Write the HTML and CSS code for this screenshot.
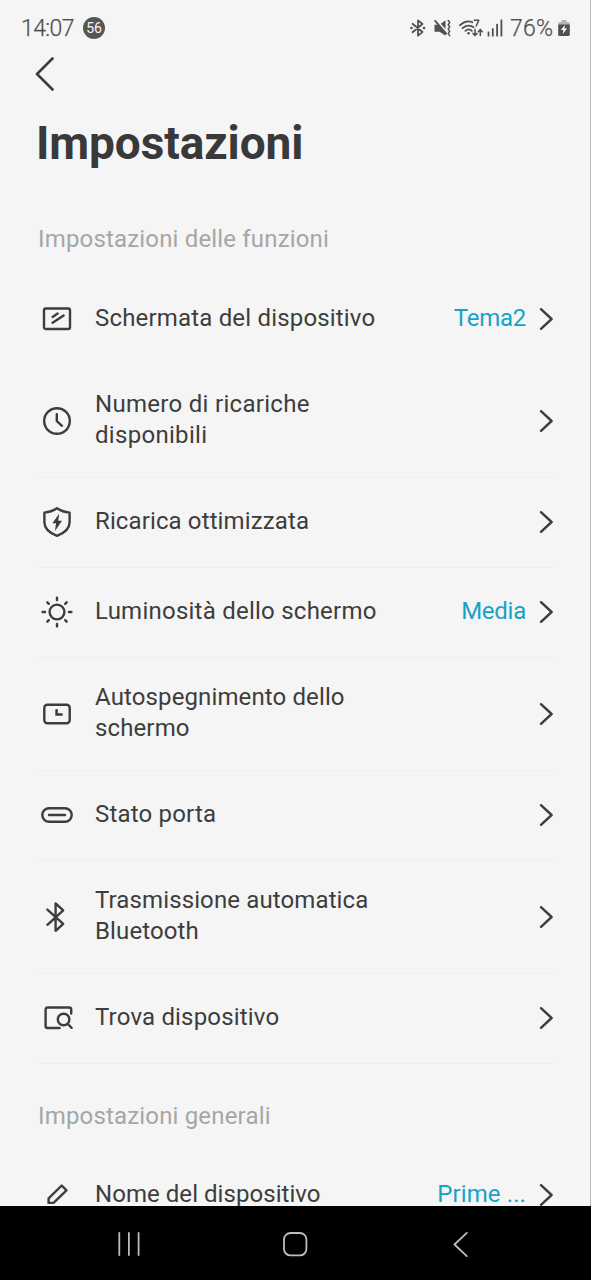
FILE: index.html
```html
<!DOCTYPE html>
<html lang="it">
<head>
<meta charset="utf-8">
<title>Impostazioni</title>
<link rel="stylesheet" href="styles.css">
</head>
<body>
<svg class="defs" aria-hidden="true">
  <symbol id="chevron" viewBox="0 0 14 22"><path d="M2 1.200 12.600 11 2 20.800"/></symbol>
</svg>
<div class="screen">
  <header class="status">
    <span class="clock">14:07</span>
    <span class="count">56</span>
    <div class="indicators">
      <svg class="s-bt" viewBox="0 0 16 18"><path d="M2.500 4.800 12.500 13 8 16.600V1.400L12.500 5 2.500 13.200"/><path class="dots" d="M1.400 9h.2M14 9h.2"/></svg>
      <svg class="s-mute" viewBox="0 0 18 18"><path class="fill" d="M.5 5.800h3.700l7.300 8v3L5.600 12.800H.5zM6.800 4.800l4.700-3.600v8.800z"/><path d="M1.200 1.800 12.200 14.600"/><path class="thin" d="M14.200 1.500l1.500 2-1.500 2.300 1.500 2.200-1.500 2.200 1.500 2.200-1.500 2.200 1.500 2"/></svg>
      <svg class="s-wifi" viewBox="0 0 25 18"><path d="M1 6.200C5 2.400 10 1.700 13.400 3.200M3.600 9.200c3.400-3.300 8-3.400 11-.8M6.400 11.900c2-1.800 4.600-1.800 6.400 0"/><circle cx="9.600" cy="14.200" r="1.300"/><path class="thin" d="M15.300 1.200h4.500L17.200 7M16 10.400v6M14 14.400l2 2.200 2-2.200M21.300 16.600v-6M19.300 12.700l2-2.200 2 2.200"/></svg>
      <svg class="s-signal" viewBox="0 0 17 18"><path d="M1.500 13.500v3.200M5.800 10v6.700M10.100 5.600v11.100M14.400 1.200v15.500"/></svg>
      <span class="percent">76%</span>
      <svg class="s-batt" viewBox="0 0 12 18"><path class="tip" d="M3.500 1h5v2h1.700q1.600 0 1.600 1.600V6H.2V4.600Q.2 3 1.800 3h1.700z"/><path class="fill" d="M.2 5.500h11.600v9.900q0 1.600-1.600 1.600H1.800q-1.600 0-1.600-1.600z"/><path class="bolt" d="M7.200 5.800 2.800 11h2.600l-.7 4 4.500-5.400H6.500z"/></svg>
    </div>
  </header>
  <nav class="topbar"><svg class="back" viewBox="0 0 20 34"><path d="M17.500 1.500 2 17 17.500 32.500"/></svg></nav>
  <h1 class="title">Impostazioni</h1>
  <main class="content">
    <h2 class="section s-functions">Impostazioni delle funzioni</h2>
    <ul class="list">
      <li class="row no-line">
        <svg class="icon" viewBox="0 0 32 32"><rect x="3" y="5.500" width="26" height="20.500" rx="1.800"/><path d="M11.600 13.900 16.600 10.600M11.600 19.800 22.600 12.600"/></svg>
        <span class="label">Schermata del dispositivo</span><span class="value v-theme">Tema2</span><svg class="chevron"><use href="#chevron"/></svg>
      </li>
      <li class="row tall">
        <svg class="icon" viewBox="0 0 32 32"><circle cx="16" cy="16" r="12.800"/><path d="M15.800 9.300v6.900l5.200 4.600"/></svg>
        <span class="label l-count">Numero di ricariche<br>disponibili</span><svg class="chevron"><use href="#chevron"/></svg>
      </li>
      <li class="row">
        <svg class="icon" viewBox="0 0 32 32"><path d="M16 2.200c3.800 2.600 8 4 12.600 4.400v9.600c0 6.400-5.600 10.900-12.600 13.600C9 27.100 3.400 22.600 3.400 16.200V6.600C8 6.200 12.200 4.800 16 2.200Z"/><path class="fill" d="M18.200 7.400 11.400 17.200h3.600L14 25l7-10.200h-3.800z"/></svg>
        <span class="label l-charge">Ricarica ottimizzata</span><svg class="chevron"><use href="#chevron"/></svg>
      </li>
      <li class="row">
        <svg class="icon" viewBox="0 0 32 32"><circle cx="16" cy="16" r="7.400"/><path d="M16 1.600v2.400M16 28v2.400M1.600 16H4M28 16h2.400M6.300 6.300l1.500 1.500M24.200 24.200l1.500 1.500M25.700 6.300l-1.500 1.500M7.800 24.200l-1.500 1.500"/></svg>
        <span class="label l-light">Luminosità dello schermo</span><span class="value v-light">Media</span><svg class="chevron"><use href="#chevron"/></svg>
      </li>
      <li class="row tall">
        <svg class="icon" viewBox="0 0 32 32"><rect x="3.300" y="6.800" width="25.400" height="18.400" rx="3"/><path class="square" d="M15.600 12.300v4.200h5"/></svg>
        <span class="label l-off">Autospegnimento dello<br>schermo</span><svg class="chevron"><use href="#chevron"/></svg>
      </li>
      <li class="row">
        <svg class="icon" viewBox="0 0 32 32"><rect x="1.300" y="9.200" width="29.400" height="13.600" rx="6.800"/><path d="M8 16h16"/></svg>
        <span class="label l-port">Stato porta</span><svg class="chevron"><use href="#chevron"/></svg>
      </li>
      <li class="row tall">
        <svg class="icon" viewBox="0 0 32 32"><path d="M6.400 8.600 22.200 22.800 14.600 29.800V2.400L22.200 9.400 6.400 23.800"/></svg>
        <span class="label l-bt">Trasmissione automatica<br>Bluetooth</span><svg class="chevron"><use href="#chevron"/></svg>
      </li>
      <li class="row">
        <svg class="icon" viewBox="0 0 32 32"><path d="M30.200 11.500V7.500q0-2-2-2H6.600q-2 0-2 2V24q0 2 2 2h12"/><circle cx="22.600" cy="17.500" r="5.800"/><path d="M26.800 22 30.600 25.800"/></svg>
        <span class="label l-find">Trova dispositivo</span><svg class="chevron"><use href="#chevron"/></svg>
      </li>
    </ul>
    <h2 class="section s-general">Impostazioni generali</h2>
    <ul class="list">
      <li class="row">
        <svg class="icon" viewBox="0 0 32 32"><path d="M7.600 23.900v-4.600L20.700 6.500l4.800 4.800-13 12.600z"/></svg>
        <span class="label l-name">Nome del dispositivo</span><span class="value v-name">Prime ...</span><svg class="chevron"><use href="#chevron"/></svg>
      </li>
    </ul>
  </main>
  <footer class="navbar">
    <svg viewBox="0 0 26 26"><path d="M3.300 2v22M12.900 2v22M22.600 2v22"/></svg>
    <svg viewBox="0 0 26 26"><rect x="2" y="2" width="22.400" height="22.400" rx="6.500"/></svg>
    <svg viewBox="0 0 26 26"><path d="M18.800 1.800 6.500 13.500 18.800 25.200"/></svg>
  </footer>
</div>
</body>
</html>
```

FILE: styles.css
```css
* { box-sizing: border-box; }
body { margin: 0; background: #f5f5f5; color: #3d3d3d; font-family: Roboto, "Noto Sans", sans-serif; }
svg { flex: none; fill: none; stroke: currentColor; stroke-linecap: round; stroke-linejoin: round; }
.defs { display: none; }
.screen { display: flex; flex-direction: column; height: 1280px; overflow: hidden; }
.status, .topbar, .title, .content { border-right: 1px solid #bdbdbd; }

.status { display: flex; align-items: center; height: 56px; padding: 0 20px 0 21px; color: #505050; }
.clock { font-size: 23px; letter-spacing: -0.6px; font-weight: 300; -webkit-text-stroke: .25px currentColor; width: 62px; }
.count { width: 22px; height: 22px; border-radius: 50%; background: #565656; color: #f5f5f5; font-size: 14px; line-height: 22px; text-align: center; }
.indicators { display: flex; align-items: center; margin-left: auto; height: 22px; }
.indicators svg { height: 18px; stroke-width: 1.8; }
.indicators .fill, .indicators circle { fill: currentColor; stroke: none; }
.indicators .thin { stroke-width: 1.5; }
.s-bt { width: 16px; margin-right: 8px; }
.s-bt .dots { stroke-width: 2.4; }
.s-mute { width: 18px; margin-right: 7px; }
.s-wifi { width: 25px; margin-right: 3px; }
.s-signal { width: 17px; margin-right: 6px; }
.percent { width: 48px; font-size: 23px; font-weight: 300; -webkit-text-stroke: .25px currentColor; letter-spacing: .2px; }
.s-batt { width: 12px; }
.s-batt .tip { fill: #b4b4b4; stroke: none; }
.s-batt .bolt { fill: #f5f5f5; stroke: none; }

.topbar { height: 44px; padding: 1px 0 0 35px; }
.back { display: block; width: 20px; height: 34px; stroke-width: 2.6; }
.title { margin: 0; height: 87px; padding: 16px 0 0 36px; font-size: 46px; line-height: 54px; font-weight: 700; letter-spacing: -0.1px; color: #393939; white-space: nowrap; }
.content { flex: 1; min-height: 0; padding: 0 37px 0 38px; overflow: hidden; }
.section { margin: 0; height: 87px; padding-top: 38px; font-size: 24px; line-height: 28px; font-weight: 400; letter-spacing: .17px; color: #a6a6a6; white-space: nowrap; }
.s-functions { height: 88px; }
.list { margin: 0; padding: 0; list-style: none; }
.row { display: flex; align-items: center; height: 90px; padding-bottom: 1px; border-bottom: 1px solid #eee; }
.row.tall { height: 113px; padding-bottom: 0; }
.row.no-line { border-color: transparent; }
.icon { width: 32px; height: 32px; margin: 0 22px 0 3px; stroke-width: 2.4; }
.icon .fill { fill: currentColor; stroke: none; }
.icon .square { stroke-linejoin: miter; stroke-width: 2.6; }
.label { flex: 1; font-size: 24px; line-height: 31px; padding-bottom: 2px; letter-spacing: .18px; white-space: nowrap; }
.tall .label { padding-bottom: 3px; }
.l-count { letter-spacing: .3px; }
.l-charge, .l-off, .l-bt { letter-spacing: .12px; }
.l-light { letter-spacing: .24px; }
.l-name { letter-spacing: .05px; }
.value { font-size: 24px; line-height: 31px; padding-bottom: 2px; color: #17a2c8; margin-right: 13px; letter-spacing: -.25px; white-space: nowrap; }
.v-name { letter-spacing: .1px; }
.chevron { width: 14px; height: 22px; stroke-width: 2.4; }

.navbar { display: flex; justify-content: center; align-items: center; gap: 140px; height: 74px; background: #000; color: #bcbcbc; padding: 1px 2px 0 0; }
.navbar svg { width: 26px; height: 26px; stroke-width: 1.8; }
```
